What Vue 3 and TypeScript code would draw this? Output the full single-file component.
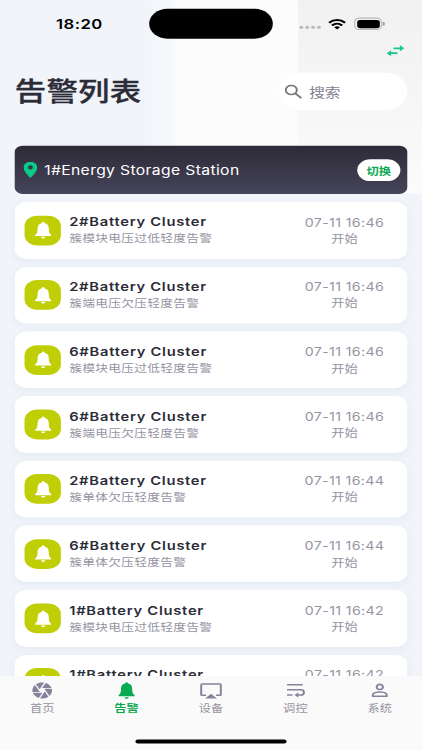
<script setup lang="ts">
interface Alarm {
  device: string
  message: string
  time: string
}

interface Tab {
  label: string
  icon: string
  active?: boolean
}

const bell =
  'M12 1.700c-.7 0-1.200.6-1.200 1.500C7.900 3.900 6.300 6.300 6.300 10c0 4.500-.5 6.200-2.400 7.700V19.300h16.200v-1.600c-1.900-1.500-2.400-3.200-2.400-7.700 0-3.700-1.600-6.100-4.500-6.800 0-.9-.5-1.500-1.200-1.500zM9.800 20.300c.3 1.300 1.100 2 2.200 2s1.900-.7 2.200-2z'

const alarms: Alarm[] = [
  { device: '2#Battery Cluster', message: '簇模块电压过低轻度告警', time: '07-11 16:46' },
  { device: '2#Battery Cluster', message: '簇端电压欠压轻度告警', time: '07-11 16:46' },
  { device: '6#Battery Cluster', message: '簇模块电压过低轻度告警', time: '07-11 16:46' },
  { device: '6#Battery Cluster', message: '簇端电压欠压轻度告警', time: '07-11 16:46' },
  { device: '2#Battery Cluster', message: '簇单体欠压轻度告警', time: '07-11 16:44' },
  { device: '6#Battery Cluster', message: '簇单体欠压轻度告警', time: '07-11 16:44' },
  { device: '1#Battery Cluster', message: '簇模块电压过低轻度告警', time: '07-11 16:42' },
  { device: '1#Battery Cluster', message: '簇端电压欠压轻度告警', time: '07-11 16:42' },
]

const tabs: Tab[] = [
  {
    label: '首页',
    icon: 'M13.73,15L9.83,21.76C10.53,21.91 11.25,22 12,22C14.4,22 16.6,21.15 18.32,19.75L14.66,13.4M2.46,15C3.38,17.92 5.61,20.26 8.45,21.34L12.12,15M8.54,12L4.64,5.25C3,7 2,9.39 2,12C2,12.68 2.07,13.35 2.2,14H9.69M21.8,10H14.31L14.6,10.5L19.36,18.75C21,16.97 22,14.6 22,12C22,11.31 21.93,10.64 21.8,10M21.54,9C20.62,6.07 18.39,3.74 15.55,2.66L11.88,9M9.4,10.5L14.17,2.24C13.47,2.09 12.75,2 12,2C9.6,2 7.4,2.84 5.68,4.25L9.34,10.6L9.4,10.5Z',
  },
  { label: '告警', icon: bell, active: true },
  {
    label: '设备',
    icon: 'M6 22h12l-6-6zM21 3H3c-1.1 0-2 .9-2 2v12c0 1.1.9 2 2 2h4v-2H3V5h18v12h-4v2h4c1.1 0 2-.9 2-2V5c0-1.1-.9-2-2-2z',
  },
  {
    label: '调控',
    icon: 'M3.500 4h16v2h-16zM3.500 10.200h14a4.200 4.200 0 0 1 0 8.400h-2.500v2.200L11 17.600l4-3.200v2.200h2.500a2.200 2.200 0 0 0 0-4.400h-14zM3.500 16.600h5.500v2h-5.500z',
  },
  {
    label: '系统',
    icon: 'M12 5.400a2.200 2.200 0 1 1 0 4.400 2.200 2.200 0 0 1 0-4.400m0 9.600c2.970 0 6.100 1.260 6.100 2.100v1.100H5.900v-1.100c0-.840 3.130-2.100 6.100-2.100M12 3.400C9.680 3.400 7.800 5.280 7.800 7.600s1.880 4.200 4.200 4.200 4.200-1.880 4.200-4.200-1.880-4.200-4.200-4.200zm0 9.600c-2.670 0-8 1.340-8 4v3.200h16V17c0-2.660-5.330-4-8-4z',
  },
]
</script>

<template>
  <div class="viewport">
    <main class="phone">
      <div class="status">
        <span class="clock">18:20</span>
        <div class="island"></div>
        <div class="signals">
          <div class="dots"><i v-for="n in 4" :key="n"></i></div>
          <svg class="wifi" viewBox="0 0 20 15">
            <g fill="none" stroke="#000" stroke-width="2.800">
              <path d="M1.300 5.500C6.300.700 13.700.700 18.700 5.500" />
              <path d="M4.500 9.200C7.700 6.200 12.300 6.200 15.500 9.200" />
            </g>
            <path d="M6.900 11.500c1.800-1.600 4.400-1.600 6.200 0L10 14.700z" />
          </svg>
          <div class="battery"><div class="charge"></div></div>
        </div>
      </div>

      <div class="actions">
        <svg class="swap" viewBox="0 0 18 14">
          <path d="M0 10.100 4.500 6.400V9H11v2.200H4.500v2.600zM18 4 13.500.300v2.600H7v2.200h6.500v2.600z" />
        </svg>
      </div>

      <header class="heading">
        <h1>告警列表</h1>
        <div class="search">
          <svg viewBox="0 0 18 18"><circle cx="6.800" cy="6.800" r="5.700" /><path d="m11 11 6 6" /></svg>
          <span>搜索</span>
        </div>
      </header>

      <section class="station">
        <svg class="pin" viewBox="5 2 14 20">
          <path d="M12 2C8.130 2 5 5.130 5 9c0 5.250 7 13 7 13s7-7.750 7-13c0-3.870-3.130-7-7-7zm0 9.500a2.500 2.500 0 0 1 0-5 2.500 2.500 0 0 1 0 5z" />
        </svg>
        <span class="station-name">1#Energy Storage Station</span>
        <button class="switch">切换</button>
      </section>

      <section class="list">
        <article v-for="(alarm, index) in alarms" :key="index" class="card">
          <div class="badge"><svg viewBox="0 0 24 24"><path :d="bell" /></svg></div>
          <div class="info">
            <span class="device">{{ alarm.device }}</span>
            <span class="message">{{ alarm.message }}</span>
          </div>
          <div class="when">
            <span class="time">{{ alarm.time }}</span>
            <span class="state">开始</span>
          </div>
        </article>
      </section>

      <nav class="tabbar">
        <div class="tabs">
          <div v-for="tab in tabs" :key="tab.label" class="tab" :class="{ active: tab.active }">
            <svg viewBox="0 0 24 24"><path fill-rule="evenodd" :d="tab.icon" /></svg>
            <span>{{ tab.label }}</span>
          </div>
        </div>
        <div class="home-bar"></div>
      </nav>
    </main>
  </div>
</template>

<style>
body {
  margin: 0;
  background: #f1f5f9;
}
</style>

<style scoped>
.viewport {
  width: 422px;
  height: 750px;
  overflow: hidden;
}

/* 430 x 932 layout fitted to the window */
.phone {
  width: 430px;
  height: 932px;
  box-sizing: border-box;
  display: flex;
  flex-direction: column;
  overflow: hidden;
  transform: scale(0.9814, 0.80472);
  transform-origin: 0 0;
  font-family: Inter, 'Noto Sans CJK SC', sans-serif;
  color: #2c2b38;
  background:
    linear-gradient(#f1f1f2, #fbfbfb) 304px 0 / 126px 241px no-repeat,
    linear-gradient(90deg, #f1f5fa 0 150px, #f6f8fc 174px, #fcfcfd 182px) 0 0 / 304px 241px no-repeat,
    #f1f5f9;
}

.status {
  height: 48px;
  padding-top: 11px;
  box-sizing: border-box;
  flex-shrink: 0;
  display: grid;
  grid-template-columns: 152px 126px 1fr;
}

.clock {
  padding-left: 57px;
  padding-top: 8px;
  font-size: 17px;
  line-height: 22px;
  font-weight: 600;
  letter-spacing: 0.5px;
  color: #000;
}

.island {
  height: 37px;
  border-radius: 19px;
  background: #000;
}

.signals {
  height: 37px;
  display: flex;
  align-items: center;
  padding-left: 27px;
}

.dots {
  display: flex;
  gap: 2px;
  padding-top: 8px;
}

.dots i {
  width: 4px;
  height: 4px;
  border-radius: 50%;
  background: #bbb;
}

.wifi {
  width: 19px;
  height: 14px;
  margin-left: 7px;
}

.battery {
  position: relative;
  width: 28px;
  height: 15px;
  margin-left: 8px;
  box-sizing: border-box;
  border: 1px solid #a4a4a4;
  border-radius: 5px;
  padding: 1.500px;
}

.battery::after {
  content: '';
  position: absolute;
  right: -3.500px;
  top: 4px;
  width: 2px;
  height: 5px;
  border-radius: 0 2px 2px 0;
  background: #999;
}

.charge {
  height: 100%;
  border-radius: 3px;
  background: #000;
}

.actions {
  height: 42px;
  flex-shrink: 0;
  display: flex;
  justify-content: flex-end;
  padding: 8px 18px 0 0;
  box-sizing: border-box;
}

.swap {
  width: 18px;
  height: 14px;
  fill: #15c98a;
}

.heading {
  height: 91px;
  flex-shrink: 0;
  padding: 0 15px;
  display: flex;
  align-items: flex-start;
  justify-content: space-between;
}

h1 {
  margin: 1px 0 0;
  font-size: 32px;
  line-height: 48px;
  font-weight: 500;
  letter-spacing: 0.3px;
  -webkit-text-stroke: 0.4px #2c2b38;
}

.search {
  width: 131px;
  height: 47px;
  border-radius: 24px;
  box-sizing: border-box;
  padding-left: 6px;
  display: flex;
  align-items: center;
  background: #fff;
  font-size: 16px;
  color: #858393;
}

.search svg {
  width: 18px;
  height: 18px;
  margin-right: 7px;
  fill: none;
  stroke: #777;
  stroke-width: 2;
}

.station {
  height: 60px;
  flex-shrink: 0;
  margin: 0 15px;
  padding: 0 7px 0 9px;
  display: flex;
  align-items: center;
  border-radius: 8px;
  background: linear-gradient(#2d2b37, #45445a);
}

.pin {
  width: 14px;
  height: 20px;
  fill: #0bcb8a;
}

.station-name {
  flex: 1;
  margin-left: 7px;
  font-size: 16px;
  letter-spacing: 0.36px;
  white-space: nowrap;
  color: #fff;
}

.switch {
  width: 44px;
  height: 27px;
  padding: 0;
  border: 0;
  border-radius: 14px;
  background: #fff;
  color: #0aaa51;
  font: 700 12.500px 'Noto Sans CJK SC', sans-serif;
}

.list {
  flex: 1;
  min-height: 0;
  overflow: hidden;
  padding: 10.300px 15px 0;
  display: flex;
  flex-direction: column;
  gap: 10px;
}

.card {
  height: 70.360px;
  flex-shrink: 0;
  box-sizing: border-box;
  padding: 0 10px;
  display: flex;
  align-items: center;
  border-radius: 12px;
  background: #fff;
  box-shadow: 0 3px 8px rgb(73 91 170 / 6%);
}

.badge {
  width: 37px;
  height: 37px;
  border-radius: 13px;
  display: flex;
  align-items: center;
  justify-content: center;
  background: #bfce05;
}

.badge svg {
  width: 24px;
  height: 24px;
  fill: #fff;
}

.info {
  flex: 1;
  margin-left: 8.500px;
  padding-top: 1px;
  display: flex;
  flex-direction: column;
}

.device {
  font-size: 15px;
  line-height: 20px;
  font-weight: 600;
  letter-spacing: 0.75px;
}

.message {
  font-size: 13px;
  line-height: 21px;
  letter-spacing: 0.25px;
  color: #9694a3;
}

.when {
  width: 108px;
  padding-top: 1px;
  display: flex;
  flex-direction: column;
  align-items: center;
  color: #9694a3;
}

.time {
  font-size: 14.500px;
  line-height: 20px;
  letter-spacing: 0.35px;
}

.state {
  font-size: 13.500px;
  line-height: 20px;
}

.tabbar {
  height: 92px;
  flex-shrink: 0;
  display: flex;
  flex-direction: column;
  align-items: center;
  justify-content: space-between;
  background: #fafafb;
}

.tabs {
  width: 100%;
  display: grid;
  grid-template-columns: repeat(5, 1fr);
  padding-top: 6px;
}

.tab {
  display: flex;
  flex-direction: column;
  align-items: center;
  font-size: 12.500px;
  line-height: 22px;
  color: #96959d;
}

.tab svg {
  width: 24px;
  height: 24px;
  fill: #85839a;
}

.tab.active {
  color: #0aaa51;
  font-weight: 700;
}

.tab.active svg {
  fill: #0aaa51;
}

.home-bar {
  width: 154px;
  height: 5px;
  margin-bottom: 8px;
  border-radius: 3px;
  background: #000;
}
</style>
